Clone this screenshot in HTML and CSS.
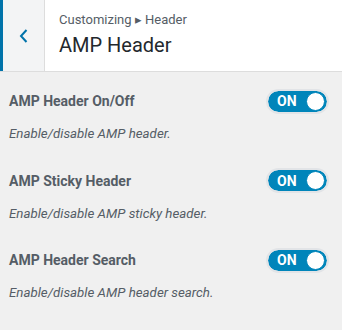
FILE: index.html
```html
<!DOCTYPE html>
<html lang="en">

<head>
    <meta charset="UTF-8">
    <title>AMP Header</title>
    <link rel="stylesheet" href="styles.css">
</head>

<body>
    <header class="section-head">
        <button class="back-button" aria-label="Back">
            <svg width="10" height="14" viewBox="0 0 10 14">
                <path d="M7.5 1 L2 7 L7.5 13" fill="none" stroke="#0073aa" stroke-width="2" />
            </svg>
        </button>
        <div class="head-titles">
            <span class="crumb">Customizing &#9656; Header</span>
            <h1>AMP Header</h1>
        </div>
    </header>

    <ul class="controls">
        <li class="control">
            <div class="control-row">
                <span class="control-title">AMP Header On/Off</span>
                <label class="switch"><span class="switch-text">ON</span><span class="knob"></span></label>
            </div>
            <p class="control-desc">Enable/disable AMP header.</p>
        </li>
        <li class="control">
            <div class="control-row">
                <span class="control-title">AMP Sticky Header</span>
                <label class="switch"><span class="switch-text">ON</span><span class="knob"></span></label>
            </div>
            <p class="control-desc">Enable/disable AMP sticky header.</p>
        </li>
        <li class="control">
            <div class="control-row">
                <span class="control-title">AMP Header Search</span>
                <label class="switch"><span class="switch-text">ON</span><span class="knob"></span></label>
            </div>
            <p class="control-desc">Enable/disable AMP header search.</p>
        </li>
    </ul>
</body>

</html>
```

FILE: styles.css
```css
body {
    font-family: Roboto, 'Liberation Sans', sans-serif;
    margin: 0;
    padding: 0;
    background: #f0f0f0;
    color: #555d66;
}

.section-head {
    display: flex;
    height: 71px;
    background: #fff;
    border-bottom: 1px solid #ddd;
}

.back-button {
    width: 45px;
    padding: 0;
    border: none;
    border-left: 3px solid #0073aa;
    border-right: 1px solid #ddd;
    background: #f3f4f5;
    display: flex;
    align-items: center;
    justify-content: center;
}

.head-titles {
    display: flex;
    flex-direction: column;
    padding: 12px 0 0 14px;
}

.crumb {
    font-size: 13px;
    line-height: 16px;
    color: #555d66;
}

.head-titles h1 {
    margin: 4px 0 0;
    font-size: 20px;
    font-weight: 400;
    line-height: 26px;
    color: #23282d;
}

.controls {
    list-style: none;
    margin: 0;
    padding: 17px 13px 0 9px;
}

.control {
    height: 79.5px;
}

.control-row {
    display: flex;
    justify-content: space-between;
    align-items: center;
    height: 24px;
}

.control-title {
    font-size: 14px;
    font-weight: 700;
    color: #555d66;
}

.control-desc {
    margin: 13px 0 0;
    font-size: 13.3px;
    font-style: italic;
    color: #555d66;
}

.switch {
    display: flex;
    align-items: center;
    box-sizing: border-box;
    width: 63px;
    height: 25px;
    padding: 0 2px 0 9px;
    border: 2px solid #e2e4e7;
    border-radius: 13px;
    background: #0085ba;
    background-clip: padding-box;
    justify-content: space-between;
}

.switch-text {
    color: #fff;
    font-size: 14px;
    font-weight: 700;
}

.knob {
    width: 19px;
    height: 19px;
    box-sizing: border-box;
    border-radius: 50%;
    background: #fff;
    border: 1px solid #0085ba;
}
```
